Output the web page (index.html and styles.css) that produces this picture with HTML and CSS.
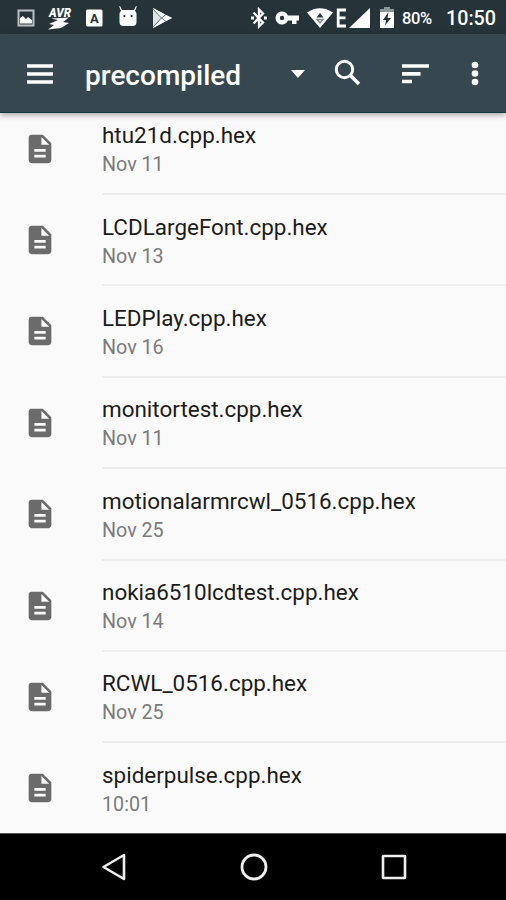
FILE: index.html
```html
<!DOCTYPE html>
<html lang="en">
<head>
<meta charset="utf-8">
<title>precompiled</title>
<link rel="stylesheet" href="styles.css">
</head>
<body>
<svg class="defs" width="0" height="0" aria-hidden="true">
  <symbol id="file" viewBox="0 0 24 24"><path d="M14 2H6C4.900 2 4 2.900 4 4v16c0 1.100.9 2 2 2h12c1.100 0 2-.9 2-2V8zM16 18H8v-2h8zM16 14H8v-2h8zM13 9V3.500L18.500 9z"/></symbol>
</svg>
<div class="screen">
  <header class="status">
    <div class="notifications">
      <svg width="18" height="18" viewBox="0 0 18 18"><path fill="none" stroke="#b9c0c3" stroke-width="2" d="M1.500 1.500h15v15h-15z"/><path fill="#fff" d="M3 14.500V9l3-2 3 3 2-2 4 3v3.500z"/></svg>
      <svg width="26" height="24" viewBox="0 0 26 24"><text class="avr" x="2" y="11" textLength="22" lengthAdjust="spacingAndGlyphs">AVR</text><path fill="#fff" d="M4 12.500l18-1-6 4.500 6 1-8 5-13 1.500 6-4.500-5-1 9-4z"/></svg>
      <svg width="17" height="18" viewBox="0 0 17 18"><rect y=".5" width="16.500" height="17" rx="1.500" fill="#fff"/><text class="letter" x="8.300" y="13.500" text-anchor="middle">A</text></svg>
      <svg width="20" height="22" viewBox="0 0 20 22"><path fill="#fff" d="M2 1l2 4h12l2-4 .8.500L17 6q1.500 1 1.500 3v8q0 4-4 4h-9q-4 0-4-4V9q0-2 1.500-3L1.200 1.500z"/><path stroke="#26343a" stroke-width="1.800" d="M5.500 11h1.800M12.700 11h1.800"/></svg>
      <svg width="21" height="20" viewBox="0 0 21 20"><path fill="#dfe3e4" d="M1 0l19 10L1 20z"/><path fill="#fff" d="M1 0l12 6.500-3.500 3.500zM1 20l12-6.500L9.500 10zM14 7l6 3-6 3-3-3z"/><path fill="none" stroke="#68757a" d="M1 1l8.500 9L1 19M9.500 10l4.500-3.500M9.500 10l4.500 3.500"/></svg>
    </div>
    <div class="system">
      <svg width="18" height="22" viewBox="0 0 18 22"><path fill="none" stroke="#fff" stroke-width="2.300" d="M3.500 5.500L13 15.500 9 19.500v-17L13 6.500 3.500 16.500"/><path fill="#fff" d="M1 9.500h3v3H1zM14 9.500h3v3h-3z"/></svg>
      <svg width="24" height="14" viewBox="0 0 24 14"><path fill="#fff" fill-rule="evenodd" d="M13 4.500A6.500 6.500 0 1 0 13 9.500h4V13h4.500V9.500H24v-5zM7 4.800a2.200 2.200 0 1 1 0 4.400 2.200 2.200 0 0 1 0-4.400z"/></svg>
      <svg width="26" height="20" viewBox="0 0 26 20"><path fill="#fff" d="M0 4.500Q13-4 26 4.500L13 20z"/><path fill="#26343a" d="M9.500 9.500L13 5l3.500 4.500z"/><path fill="none" stroke="#7c878b" stroke-width="1.300" d="M10 11.500h6L13 15z"/></svg>
      <svg width="11" height="20" viewBox="0 0 11 20"><path fill="none" stroke="#fff" stroke-width="2.800" d="M10 2H2.200v16H10M2 9.800h7.500"/></svg>
      <svg width="21" height="20" viewBox="0 0 21 20"><path fill="#fff" d="M21 0v20H0z"/></svg>
      <svg width="14" height="21" viewBox="0 0 14 21"><path fill="#8d979b" d="M4 0h6v2h4v4H0V2h4z"/><path fill="#fff" d="M0 5h14v16H0z"/><path fill="#26343a" d="M8.500 5L3 13h3.200L5 18.500 11 11H7.500z"/></svg>
      <span class="percent">80%</span>
      <span class="clock">10:50</span>
    </div>
  </header>
  <nav class="toolbar">
    <svg class="menu" width="26" height="20" viewBox="0 0 26 20"><path stroke="#fff" stroke-width="3.300" d="M0 2h26M0 10h26M0 18h26"/></svg>
    <h1>precompiled</h1>
    <svg class="caret" width="14" height="8" viewBox="0 0 14 8"><path fill="#fff" d="M0 0h14L7 8z"/></svg>
    <svg class="search" width="27" height="27" viewBox="0 0 27 27"><circle cx="10.500" cy="10.500" r="8.200" fill="none" stroke="#fff" stroke-width="3"/><path stroke="#fff" stroke-width="3.600" d="M16 16l9 9"/></svg>
    <svg class="sort" width="27" height="20" viewBox="0 0 27 20"><path stroke="#fff" stroke-width="3.700" d="M0 2h27M0 9.800h18.500M0 17.500h10"/></svg>
    <svg class="more" width="8" height="25" viewBox="0 0 8 25"><g fill="#fff"><circle cx="4" cy="4" r="3.300"/><circle cx="4" cy="12.500" r="3.300"/><circle cx="4" cy="21" r="3.300"/></g></svg>
  </nav>
  <main>
    <ul>
      <li><svg><use href="#file"/></svg><div><p>htu21d.cpp.hex</p><small>Nov 11</small></div></li>
      <li><svg><use href="#file"/></svg><div><p>LCDLargeFont.cpp.hex</p><small>Nov 13</small></div></li>
      <li><svg><use href="#file"/></svg><div><p>LEDPlay.cpp.hex</p><small>Nov 16</small></div></li>
      <li><svg><use href="#file"/></svg><div><p>monitortest.cpp.hex</p><small>Nov 11</small></div></li>
      <li><svg><use href="#file"/></svg><div><p>motionalarmrcwl_0516.cpp.hex</p><small>Nov 25</small></div></li>
      <li><svg><use href="#file"/></svg><div><p>nokia6510lcdtest.cpp.hex</p><small>Nov 14</small></div></li>
      <li><svg><use href="#file"/></svg><div><p>RCWL_0516.cpp.hex</p><small>Nov 25</small></div></li>
      <li><svg><use href="#file"/></svg><div><p>spiderpulse.cpp.hex</p><small>10:01</small></div></li>
    </ul>
  </main>
  <footer>
    <svg width="26" height="28" viewBox="0 0 26 28"><path fill="none" stroke="#eee" stroke-width="2.600" stroke-linejoin="round" d="M23 2v24L2.500 14z"/></svg>
    <svg width="28" height="28" viewBox="0 0 28 28"><circle cx="14" cy="14" r="12" fill="none" stroke="#eee" stroke-width="2.800"/></svg>
    <svg width="26" height="26" viewBox="0 0 26 26"><rect x="2" y="2" width="22" height="22" rx=".5" fill="none" stroke="#eee" stroke-width="2.600"/></svg>
  </footer>
</div>
</body>
</html>
```
FILE: styles.css
```css
* { box-sizing: border-box; }
body { margin: 0; font-family: Roboto, sans-serif; }
svg { display: block; flex: none; }
.defs { display: none; }
.screen { width: 506px; height: 900px; display: flex; flex-direction: column; background: #fafafa; overflow: hidden; }

.status { flex: none; height: 34px; background: #26343a; color: #fff; display: flex; justify-content: space-between; align-items: center; padding: 1px 11px 0 16.500px; }
.notifications { display: flex; align-items: center; }
.notifications svg:nth-child(2) { margin-left: 12px; }
.notifications svg:nth-child(3) { margin-left: 13px; }
.notifications svg:nth-child(4) { margin-left: 15px; margin-bottom: 3px; }
.notifications svg:nth-child(5) { margin-left: 14px; }
.avr { font: italic 900 13px Roboto, sans-serif; fill: #fff; }
.letter { font: 700 13px Roboto, sans-serif; fill: #26343a; }
.system { display: flex; align-items: center; }
.system svg:nth-child(2) { margin-left: 7px; }
.system svg:nth-child(3) { margin-left: 8px; }
.system svg:nth-child(4) { margin-left: 3px; }
.system svg:nth-child(5) { margin-left: 2px; }
.system svg:nth-child(6) { margin-left: 10px; }
.percent { width: 31px; margin: 1px 0 0 8px; font-size: 16.500px; font-weight: 500; letter-spacing: -.4px; white-space: nowrap; }
.clock { width: 49px; margin: 2px 0 0 13px; font-size: 19.700px; font-weight: 500; white-space: nowrap; }

.toolbar { flex: none; position: relative; height: 79px; background: #37474f; border-bottom: 1.500px solid #173840; box-shadow: 0 2px 6px rgba(0, 0, 0, .35); color: #fff; display: flex; align-items: center; padding: 1px 0 0 27px; }
h1 { margin: 4px 0 0 32px; width: 158px; font-size: 28px; line-height: 34px; font-weight: 500; }
.caret { margin-left: 48px; margin-top: 1px; }
.search { margin-left: 29px; margin-bottom: 2px; }
.sort { margin-left: 41px; }
.more { margin-left: 42px; }

main { flex: 1; min-height: 0; overflow: hidden; }
ul { list-style: none; margin: -9.400px 0 0; padding: 0; }
li { height: 91.400px; display: flex; align-items: center; padding-left: 23px; }
li svg { width: 34px; height: 34px; margin-bottom: 1.500px; fill: #6b6b6b; }
li div { flex: 1; height: 100%; margin-left: 45px; padding-top: 18.500px; border-bottom: 2px solid #ececec; }
li:last-child div { border: 0; }
p { margin: 0; font-size: 22.450px; line-height: 27px; color: #1c1c1c; white-space: nowrap; }
small { display: block; margin-top: 3px; font-size: 19.700px; line-height: 25px; color: #7b7b7b; }

footer { flex: none; height: 67px; background: #000; border-top: 1px solid #555; display: flex; align-items: center; justify-content: space-between; padding: 0 99px 0 101px; }
```
